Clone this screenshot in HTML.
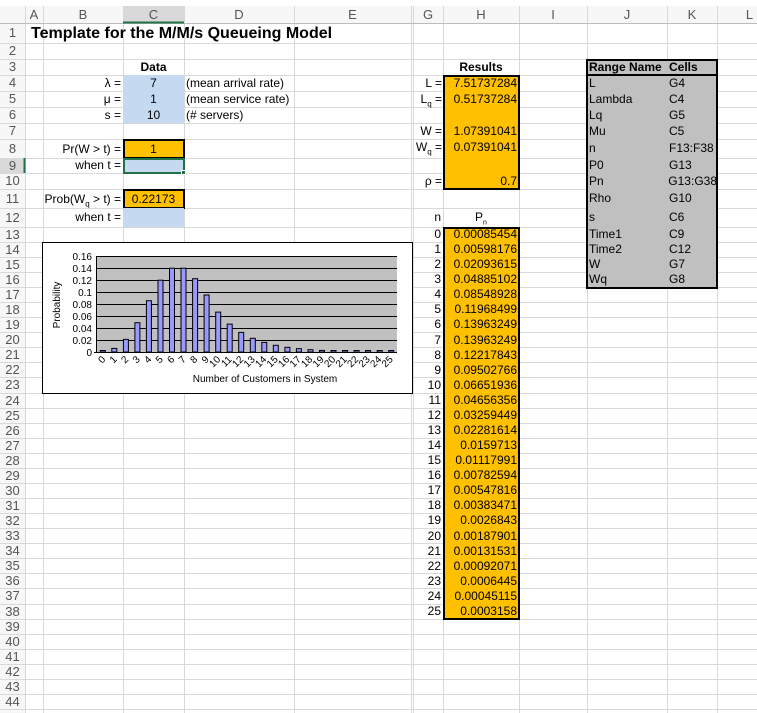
<!DOCTYPE html>
<html><head><meta charset="utf-8"><style>
body{margin:0;width:757px;height:713px;overflow:hidden;background:#fff;font-family:"Liberation Sans",Arial,sans-serif;font-size:12px;color:#000;position:relative}
.c{position:absolute;white-space:nowrap;overflow:visible}
.r{text-align:right}.m{text-align:center}
.hd{position:absolute;color:#555;font-size:13px;text-align:center}
.box{position:absolute;box-sizing:border-box}
</style></head><body>
<svg style="position:absolute;left:0;top:0" width="757" height="713">
<rect x="0" y="6" width="757" height="17" fill="#f7f7f7"/>
<rect x="0" y="23" width="25" height="690" fill="#f7f7f7"/>
<rect x="123" y="6" width="61" height="17" fill="#d9d9d9"/>
<rect x="0" y="158" width="25" height="15" fill="#d9d9d9"/>
<g stroke="#d9d9d9" stroke-width="1" shape-rendering="crispEdges">
<line x1="0" x2="757" y1="43.5" y2="43.5"/><line x1="0" x2="757" y1="59.5" y2="59.5"/><line x1="0" x2="757" y1="75.5" y2="75.5"/><line x1="0" x2="757" y1="91.5" y2="91.5"/><line x1="0" x2="757" y1="107.5" y2="107.5"/><line x1="0" x2="757" y1="123.5" y2="123.5"/><line x1="0" x2="757" y1="139.5" y2="139.5"/><line x1="0" x2="757" y1="158.5" y2="158.5"/><line x1="0" x2="757" y1="173.5" y2="173.5"/><line x1="0" x2="757" y1="189.5" y2="189.5"/><line x1="0" x2="757" y1="208.5" y2="208.5"/><line x1="0" x2="757" y1="227.5" y2="227.5"/>
<line x1="0" x2="757" y1="242.5" y2="242.5"/><line x1="0" x2="757" y1="257.5" y2="257.5"/><line x1="0" x2="757" y1="272.5" y2="272.5"/><line x1="0" x2="757" y1="287.5" y2="287.5"/><line x1="0" x2="757" y1="302.5" y2="302.5"/><line x1="0" x2="757" y1="317.5" y2="317.5"/><line x1="0" x2="757" y1="332.5" y2="332.5"/><line x1="0" x2="757" y1="347.5" y2="347.5"/><line x1="0" x2="757" y1="362.5" y2="362.5"/><line x1="0" x2="757" y1="377.5" y2="377.5"/><line x1="0" x2="757" y1="393.5" y2="393.5"/><line x1="0" x2="757" y1="408.5" y2="408.5"/><line x1="0" x2="757" y1="423.5" y2="423.5"/><line x1="0" x2="757" y1="438.5" y2="438.5"/><line x1="0" x2="757" y1="453.5" y2="453.5"/><line x1="0" x2="757" y1="468.5" y2="468.5"/><line x1="0" x2="757" y1="483.5" y2="483.5"/><line x1="0" x2="757" y1="498.5" y2="498.5"/><line x1="0" x2="757" y1="513.5" y2="513.5"/><line x1="0" x2="757" y1="528.5" y2="528.5"/><line x1="0" x2="757" y1="543.5" y2="543.5"/><line x1="0" x2="757" y1="558.5" y2="558.5"/><line x1="0" x2="757" y1="573.5" y2="573.5"/><line x1="0" x2="757" y1="588.5" y2="588.5"/><line x1="0" x2="757" y1="604.5" y2="604.5"/><line x1="0" x2="757" y1="619.5" y2="619.5"/><line x1="0" x2="757" y1="634.5" y2="634.5"/><line x1="0" x2="757" y1="649.5" y2="649.5"/><line x1="0" x2="757" y1="664.5" y2="664.5"/><line x1="0" x2="757" y1="679.5" y2="679.5"/><line x1="0" x2="757" y1="694.5" y2="694.5"/><line x1="0" x2="757" y1="709.5" y2="709.5"/>
<line x1="25.5" x2="25.5" y1="6" y2="713"/><line x1="43.5" x2="43.5" y1="6" y2="713"/><line x1="123.5" x2="123.5" y1="6" y2="713"/><line x1="184.5" x2="184.5" y1="6" y2="713"/><line x1="294.5" x2="294.5" y1="6" y2="713"/><line x1="411.5" x2="411.5" y1="6" y2="713"/><line x1="413.5" x2="413.5" y1="6" y2="713"/><line x1="443.5" x2="443.5" y1="6" y2="713"/><line x1="519.5" x2="519.5" y1="6" y2="713"/><line x1="587.5" x2="587.5" y1="6" y2="713"/><line x1="667.5" x2="667.5" y1="6" y2="713"/><line x1="717.5" x2="717.5" y1="6" y2="713"/>
</g>
<line x1="0" x2="757" y1="23.5" y2="23.5" stroke="#bdbdbd"/>
<line x1="123" x2="184" y1="22.5" y2="22.5" stroke="#217346" stroke-width="2"/>
<line x1="24.5" x2="24.5" y1="158" y2="173" stroke="#217346" stroke-width="2"/>
</svg>
<!-- column headers -->
<div class="hd" style="left:25px;width:18px;top:7px">A</div>
<div class="hd" style="left:43px;width:80px;top:7px">B</div>
<div class="hd" style="left:123px;width:61px;top:7px">C</div>
<div class="hd" style="left:184px;width:110px;top:7px">D</div>
<div class="hd" style="left:294px;width:117px;top:7px">E</div>
<div class="hd" style="left:413px;width:30px;top:7px">G</div>
<div class="hd" style="left:443px;width:76px;top:7px">H</div>
<div class="hd" style="left:519px;width:68px;top:7px">I</div>
<div class="hd" style="left:587px;width:80px;top:7px">J</div>
<div class="hd" style="left:667px;width:50px;top:7px">K</div>
<div class="hd" style="left:717px;width:65px;top:7px">L</div>
<!-- row headers -->
<div class="hd" style="left:0;width:25px;top:25px">1</div><div class="hd" style="left:0;width:25px;top:43px">2</div><div class="hd" style="left:0;width:25px;top:59px">3</div><div class="hd" style="left:0;width:25px;top:75px">4</div><div class="hd" style="left:0;width:25px;top:91px">5</div><div class="hd" style="left:0;width:25px;top:107px">6</div><div class="hd" style="left:0;width:25px;top:123px">7</div><div class="hd" style="left:0;width:25px;top:141px">8</div><div class="hd" style="left:0;width:25px;top:158px">9</div><div class="hd" style="left:0;width:25px;top:173px">10</div><div class="hd" style="left:0;width:25px;top:191px">11</div><div class="hd" style="left:0;width:25px;top:210px">12</div>
<div class="hd" style="left:0;width:25px;top:227px">13</div><div class="hd" style="left:0;width:25px;top:242px">14</div><div class="hd" style="left:0;width:25px;top:257px">15</div><div class="hd" style="left:0;width:25px;top:272px">16</div><div class="hd" style="left:0;width:25px;top:287px">17</div><div class="hd" style="left:0;width:25px;top:302px">18</div><div class="hd" style="left:0;width:25px;top:317px">19</div><div class="hd" style="left:0;width:25px;top:332px">20</div><div class="hd" style="left:0;width:25px;top:347px">21</div><div class="hd" style="left:0;width:25px;top:362px">22</div><div class="hd" style="left:0;width:25px;top:377px">23</div><div class="hd" style="left:0;width:25px;top:393px">24</div><div class="hd" style="left:0;width:25px;top:408px">25</div><div class="hd" style="left:0;width:25px;top:423px">26</div><div class="hd" style="left:0;width:25px;top:438px">27</div><div class="hd" style="left:0;width:25px;top:453px">28</div><div class="hd" style="left:0;width:25px;top:468px">29</div><div class="hd" style="left:0;width:25px;top:483px">30</div><div class="hd" style="left:0;width:25px;top:498px">31</div><div class="hd" style="left:0;width:25px;top:513px">32</div><div class="hd" style="left:0;width:25px;top:528px">33</div><div class="hd" style="left:0;width:25px;top:543px">34</div><div class="hd" style="left:0;width:25px;top:558px">35</div><div class="hd" style="left:0;width:25px;top:573px">36</div><div class="hd" style="left:0;width:25px;top:588px">37</div><div class="hd" style="left:0;width:25px;top:604px">38</div><div class="hd" style="left:0;width:25px;top:619px">39</div><div class="hd" style="left:0;width:25px;top:634px">40</div><div class="hd" style="left:0;width:25px;top:649px">41</div><div class="hd" style="left:0;width:25px;top:664px">42</div><div class="hd" style="left:0;width:25px;top:679px">43</div><div class="hd" style="left:0;width:25px;top:694px">44</div>

<!-- fills -->
<div class="box" style="left:123px;top:75px;width:61px;height:48px;background:#c5d9f1"></div>
<div class="box" style="left:123px;top:139px;width:62px;height:20px;background:#ffc000;border:2px solid #000"></div>
<div class="box" style="left:123px;top:158px;width:62px;height:16px;background:#c5d9f1;border:2px solid #217346"></div>
<div class="box" style="left:181px;top:170px;width:5px;height:5px;background:#217346;border:1px solid #fff"></div>
<div class="box" style="left:123px;top:189px;width:62px;height:20px;background:#ffc000;border:2px solid #000"></div>
<div class="box" style="left:123px;top:208px;width:61px;height:19px;background:#c5d9f1"></div>
<div class="box" style="left:443px;top:75px;width:77px;height:115px;background:#ffc000;border:2px solid #000"></div>
<div class="box" style="left:443px;top:227px;width:77px;height:393px;background:#ffc000;border:2px solid #000"></div>
<div class="box" style="left:586px;top:59px;width:132px;height:230px;background:#c0c0c0;border:2px solid #000"></div>
<div class="box" style="left:586px;top:74px;width:132px;height:2px;background:#000"></div>

<!-- text -->
<div class="c" style="left:31px;top:24px;font-size:16px;font-weight:bold;line-height:20px">Template for the M/M/s Queueing Model</div>
<div class="c m" style="left:123px;width:61px;top:59px;line-height:16px;font-weight:bold">Data</div>
<div class="c r" style="left:43px;width:78px;top:75px;line-height:16px">λ =</div>
<div class="c r" style="left:43px;width:78px;top:91px;line-height:16px">μ =</div>
<div class="c r" style="left:43px;width:78px;top:107px;line-height:16px">s =</div>
<div class="c m" style="left:123px;width:61px;top:75px;line-height:16px">7</div>
<div class="c m" style="left:123px;width:61px;top:91px;line-height:16px">1</div>
<div class="c m" style="left:123px;width:61px;top:107px;line-height:16px">10</div>
<div class="c" style="left:186px;top:75px;line-height:16px">(mean arrival rate)</div>
<div class="c" style="left:186px;top:91px;line-height:16px">(mean service rate)</div>
<div class="c" style="left:186px;top:107px;line-height:16px">(# servers)</div>
<div class="c r" style="left:43px;width:78px;top:140px;line-height:18px">Pr(W &gt; t) =</div>
<div class="c m" style="left:123px;width:61px;top:140px;line-height:18px">1</div>
<div class="c r" style="left:43px;width:78px;top:158px;line-height:15px">when t =</div>
<div class="c r" style="left:30px;width:91px;top:190px;line-height:18px">Prob(W<sub style="font-size:8px">q</sub> &gt; t) =</div>
<div class="c m" style="left:123px;width:61px;top:190px;line-height:18px">0.22173</div>
<div class="c r" style="left:43px;width:78px;top:208px;line-height:19px">when t =</div>

<div class="c m" style="left:443px;width:76px;top:59px;line-height:16px;font-weight:bold">Results</div>
<div class="c r" style="left:413px;width:29px;top:75px;line-height:16px">L =</div>
<div class="c r" style="left:405px;width:37px;top:91px;line-height:16px">L<sub style="font-size:8px">q</sub> =</div>
<div class="c r" style="left:413px;width:29px;top:123px;line-height:16px">W =</div>
<div class="c r" style="left:405px;width:37px;top:139px;line-height:16px">W<sub style="font-size:8px">q</sub> =</div>
<div class="c r" style="left:413px;width:29px;top:173px;line-height:16px">ρ =</div>
<div class="c r" style="left:443px;width:74px;top:75px;line-height:16px">7.51737284</div>
<div class="c r" style="left:443px;width:74px;top:91px;line-height:16px">0.51737284</div>
<div class="c r" style="left:443px;width:74px;top:123px;line-height:16px">1.07391041</div>
<div class="c r" style="left:443px;width:74px;top:139px;line-height:16px">0.07391041</div>
<div class="c r" style="left:443px;width:74px;top:173px;line-height:16px">0.7</div>
<div class="c r" style="left:413px;width:28px;top:208px;line-height:19px">n</div>
<div class="c m" style="left:443px;width:76px;top:208px;line-height:19px">P<sub style="font-size:7px">n</sub></div>

<div style="position:absolute;left:413px;top:227px;width:104px;line-height:15.08px">
<div style="display:flex"><span style="width:28px;text-align:right">0</span><span style="width:76px;text-align:right">0.00085454</span></div>
<div style="display:flex"><span style="width:28px;text-align:right">1</span><span style="width:76px;text-align:right">0.00598176</span></div>
<div style="display:flex"><span style="width:28px;text-align:right">2</span><span style="width:76px;text-align:right">0.02093615</span></div>
<div style="display:flex"><span style="width:28px;text-align:right">3</span><span style="width:76px;text-align:right">0.04885102</span></div>
<div style="display:flex"><span style="width:28px;text-align:right">4</span><span style="width:76px;text-align:right">0.08548928</span></div>
<div style="display:flex"><span style="width:28px;text-align:right">5</span><span style="width:76px;text-align:right">0.11968499</span></div>
<div style="display:flex"><span style="width:28px;text-align:right">6</span><span style="width:76px;text-align:right">0.13963249</span></div>
<div style="display:flex"><span style="width:28px;text-align:right">7</span><span style="width:76px;text-align:right">0.13963249</span></div>
<div style="display:flex"><span style="width:28px;text-align:right">8</span><span style="width:76px;text-align:right">0.12217843</span></div>
<div style="display:flex"><span style="width:28px;text-align:right">9</span><span style="width:76px;text-align:right">0.09502766</span></div>
<div style="display:flex"><span style="width:28px;text-align:right">10</span><span style="width:76px;text-align:right">0.06651936</span></div>
<div style="display:flex"><span style="width:28px;text-align:right">11</span><span style="width:76px;text-align:right">0.04656356</span></div>
<div style="display:flex"><span style="width:28px;text-align:right">12</span><span style="width:76px;text-align:right">0.03259449</span></div>
<div style="display:flex"><span style="width:28px;text-align:right">13</span><span style="width:76px;text-align:right">0.02281614</span></div>
<div style="display:flex"><span style="width:28px;text-align:right">14</span><span style="width:76px;text-align:right">0.0159713</span></div>
<div style="display:flex"><span style="width:28px;text-align:right">15</span><span style="width:76px;text-align:right">0.01117991</span></div>
<div style="display:flex"><span style="width:28px;text-align:right">16</span><span style="width:76px;text-align:right">0.00782594</span></div>
<div style="display:flex"><span style="width:28px;text-align:right">17</span><span style="width:76px;text-align:right">0.00547816</span></div>
<div style="display:flex"><span style="width:28px;text-align:right">18</span><span style="width:76px;text-align:right">0.00383471</span></div>
<div style="display:flex"><span style="width:28px;text-align:right">19</span><span style="width:76px;text-align:right">0.0026843</span></div>
<div style="display:flex"><span style="width:28px;text-align:right">20</span><span style="width:76px;text-align:right">0.00187901</span></div>
<div style="display:flex"><span style="width:28px;text-align:right">21</span><span style="width:76px;text-align:right">0.00131531</span></div>
<div style="display:flex"><span style="width:28px;text-align:right">22</span><span style="width:76px;text-align:right">0.00092071</span></div>
<div style="display:flex"><span style="width:28px;text-align:right">23</span><span style="width:76px;text-align:right">0.0006445</span></div>
<div style="display:flex"><span style="width:28px;text-align:right">24</span><span style="width:76px;text-align:right">0.00045115</span></div>
<div style="display:flex"><span style="width:28px;text-align:right">25</span><span style="width:76px;text-align:right">0.0003158</span></div>
</div>

<div class="c" style="left:589px;top:59px;line-height:16px;font-weight:bold">Range Name</div>
<div class="c" style="left:669px;top:59px;line-height:16px;font-weight:bold">Cells</div>
<div style="position:absolute;left:589px;top:75px;width:128px">
<div style="display:flex;height:16px;line-height:16px"><span style="width:80px">L</span><span>G4</span></div>
<div style="display:flex;height:16px;line-height:16px"><span style="width:80px">Lambda</span><span>C4</span></div>
<div style="display:flex;height:16px;line-height:16px"><span style="width:80px">Lq</span><span>G5</span></div>
<div style="display:flex;height:16px;line-height:16px"><span style="width:80px">Mu</span><span>C5</span></div>
<div style="display:flex;height:19px;line-height:19px"><span style="width:80px">n</span><span>F13:F38</span></div>
<div style="display:flex;height:15px;line-height:15px"><span style="width:80px">P0</span><span>G13</span></div>
<div style="display:flex;height:16px;line-height:16px"><span style="width:80px">Pn</span><span>G13:G38</span></div>
<div style="display:flex;height:19px;line-height:19px"><span style="width:80px">Rho</span><span>G10</span></div>
<div style="display:flex;height:19px;line-height:19px"><span style="width:80px">s</span><span>C6</span></div>
<div style="display:flex;height:15px;line-height:15px"><span style="width:80px">Time1</span><span>C9</span></div>
<div style="display:flex;height:15px;line-height:15px"><span style="width:80px">Time2</span><span>C12</span></div>
<div style="display:flex;height:15px;line-height:15px"><span style="width:80px">W</span><span>G7</span></div>
<div style="display:flex;height:15px;line-height:15px"><span style="width:80px">Wq</span><span>G8</span></div>
</div>

<!-- chart -->
<svg style="position:absolute;left:0;top:0" width="757" height="713" font-family="Liberation Sans, Arial, sans-serif">
<rect x="42.5" y="242.5" width="370" height="151" fill="#fff" stroke="#000"/>
<rect x="97" y="256" width="300" height="96" fill="#c0c0c0"/>
<g stroke="#000" stroke-width="1" shape-rendering="crispEdges">
<line x1="97" x2="397" y1="256.5" y2="256.5"/><line x1="97" x2="397" y1="268.5" y2="268.5"/><line x1="97" x2="397" y1="280.5" y2="280.5"/><line x1="97" x2="397" y1="292.5" y2="292.5"/><line x1="97" x2="397" y1="304.5" y2="304.5"/><line x1="97" x2="397" y1="316.5" y2="316.5"/><line x1="97" x2="397" y1="328.5" y2="328.5"/><line x1="97" x2="397" y1="340.5" y2="340.5"/><line x1="94" x2="397" y1="352.5" y2="352.5"/>
<line x1="96.5" x2="96.5" y1="256" y2="353"/>
</g>
<g fill="#9999ff" stroke="#000" stroke-width="1">
<rect x="100.3" y="350.5" width="5" height="1.5"/><rect x="111.8" y="348.4" width="5" height="3.6"/><rect x="123.4" y="339.4" width="5" height="12.6"/><rect x="134.9" y="322.7" width="5" height="29.3"/><rect x="146.4" y="300.7" width="5" height="51.3"/><rect x="158" y="280.2" width="5" height="71.8"/><rect x="169.5" y="268.2" width="5" height="83.8"/><rect x="181" y="268.2" width="5" height="83.8"/><rect x="192.6" y="278.7" width="5" height="73.3"/><rect x="204.1" y="295" width="5" height="57"/><rect x="215.7" y="312.1" width="5" height="39.9"/><rect x="227.2" y="324.1" width="5" height="27.9"/><rect x="238.7" y="332.4" width="5" height="19.6"/><rect x="250.3" y="338.3" width="5" height="13.7"/><rect x="261.8" y="342.4" width="5" height="9.6"/><rect x="273.3" y="345.3" width="5" height="6.7"/><rect x="284.9" y="347.3" width="5" height="4.7"/><rect x="296.4" y="348.7" width="5" height="3.3"/><rect x="308" y="349.7" width="5" height="2.3"/><rect x="319.5" y="350.4" width="5" height="1.6"/><rect x="331" y="350.5" width="5" height="1.5"/><rect x="342.6" y="350.5" width="5" height="1.5"/><rect x="354.1" y="350.5" width="5" height="1.5"/><rect x="365.6" y="350.5" width="5" height="1.5"/><rect x="377.2" y="350.5" width="5" height="1.5"/><rect x="388.7" y="350.5" width="5" height="1.5"/>
</g>
<g font-size="10" text-anchor="end">
<text x="92" y="260">0.16</text><text x="92" y="272">0.14</text><text x="92" y="284">0.12</text><text x="92" y="296">0.1</text><text x="92" y="308">0.08</text><text x="92" y="320">0.06</text><text x="92" y="332">0.04</text><text x="92" y="344">0.02</text><text x="92" y="356">0</text>
</g>
<g font-size="10" text-anchor="end">
<text transform="translate(106,360) rotate(-45)">0</text><text transform="translate(117.5,360) rotate(-45)">1</text><text transform="translate(129,360) rotate(-45)">2</text><text transform="translate(140.5,360) rotate(-45)">3</text><text transform="translate(152,360) rotate(-45)">4</text><text transform="translate(163.5,360) rotate(-45)">5</text><text transform="translate(175,360) rotate(-45)">6</text><text transform="translate(186.5,360) rotate(-45)">7</text><text transform="translate(198,360) rotate(-45)">8</text><text transform="translate(209.5,360) rotate(-45)">9</text><text transform="translate(221,360) rotate(-45)">10</text><text transform="translate(232.5,360) rotate(-45)">11</text><text transform="translate(244,360) rotate(-45)">12</text><text transform="translate(255.5,360) rotate(-45)">13</text><text transform="translate(267,360) rotate(-45)">14</text><text transform="translate(278.5,360) rotate(-45)">15</text><text transform="translate(290,360) rotate(-45)">16</text><text transform="translate(301.5,360) rotate(-45)">17</text><text transform="translate(313,360) rotate(-45)">18</text><text transform="translate(324.5,360) rotate(-45)">19</text><text transform="translate(336,360) rotate(-45)">20</text><text transform="translate(347.5,360) rotate(-45)">21</text><text transform="translate(359,360) rotate(-45)">22</text><text transform="translate(370.5,360) rotate(-45)">23</text><text transform="translate(382,360) rotate(-45)">24</text><text transform="translate(393.5,360) rotate(-45)">25</text>
</g>
<text x="265" y="382" font-size="10" text-anchor="middle">Number of Customers in System</text>
<text transform="translate(60,305) rotate(-90)" font-size="10" text-anchor="middle">Probability</text>
</svg>
</body></html>
